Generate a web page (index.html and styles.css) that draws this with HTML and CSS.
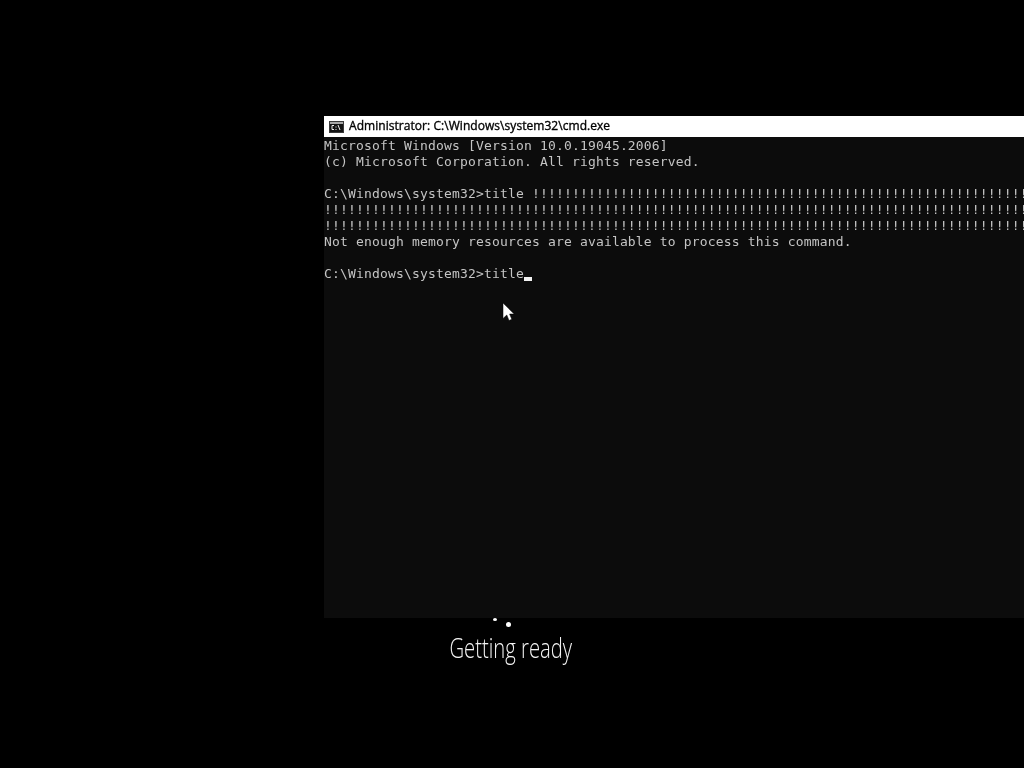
FILE: index.html
```html
<!DOCTYPE html>
<html lang="en">
<head>
<meta charset="utf-8">
<title>Administrator: C:\Windows\system32\cmd.exe</title>
<link rel="stylesheet" href="styles.css">
</head>
<body>
<main class="desktop">
  <section class="splash">
    <div class="spinner"><i class="dot dot-a"></i><i class="dot dot-b"></i></div>
    <p class="status">Getting ready</p>
  </section>
  <section class="window">
    <header class="titlebar">
      <svg class="app-icon" width="15" height="12" viewBox="0 0 15 12" aria-hidden="true">
        <rect x="0" y="0" width="15" height="12" fill="#3a3a3a"/>
        <rect x="1" y="1" width="13" height="2" fill="#a8a8a8"/>
        <rect x="1" y="3" width="13" height="8" fill="#141414"/>
        <path d="M5 4.5H3V8.5H5M7 5.5V6.5M7 8V9M9 4L11 9" fill="none" stroke="#f0f0f0" stroke-width="1"/>
      </svg>
      <span class="title-text">Administrator: C:\Windows\system32\cmd.exe</span>
    </header>
<pre class="console">Microsoft Windows [Version 10.0.19045.2006]
(c) Microsoft Corporation. All rights reserved.

C:\Windows\system32&gt;title !!!!!!!!!!!!!!!!!!!!!!!!!!!!!!!!!!!!!!!!!!!!!!!!!!!!!!!!!!!!!!!!!!!!!!!!!!
!!!!!!!!!!!!!!!!!!!!!!!!!!!!!!!!!!!!!!!!!!!!!!!!!!!!!!!!!!!!!!!!!!!!!!!!!!!!!!!!!!!!!!!!!!!!
!!!!!!!!!!!!!!!!!!!!!!!!!!!!!!!!!!!!!!!!!!!!!!!!!!!!!!!!!!!!!!!!!!!!!!!!!!!!!!!!!!!!!!!!!!!!
Not enough memory resources are available to process this command.

C:\Windows\system32&gt;title<span class="caret"></span></pre>
  </section>
  <svg class="pointer" width="13" height="20" viewBox="0 0 13 20" aria-hidden="true">
    <path d="M1 1V16.5L4.8 13L7 18.5L9.8 17.3L7.6 12H12.2Z" fill="#fff" stroke="#000" stroke-width="0.5"/>
  </svg>
</main>
</body>
</html>
```
FILE: styles.css
```css
html, body {
  margin: 0;
  height: 100%;
  background: #000;
}

.desktop {
  position: relative;
  width: 1024px;
  height: 768px;
  overflow: hidden;
  background: #000;
}

.splash {
  display: flex;
  flex-direction: column;
  align-items: center;
  padding-top: 612px;
  padding-right: 2px;
}

.spinner {
  position: relative;
  width: 40px;
  height: 18px;
}

.dot {
  position: absolute;
  border-radius: 50%;
  background: #fff;
}

.dot-a {
  left: 2px;
  top: 6px;
  width: 4px;
  height: 3px;
}

.dot-b {
  left: 15px;
  top: 10px;
  width: 5px;
  height: 5px;
}

.status {
  margin: 0;
  color: #f4f4f4;
  font-family: "Open Sans", "Noto Sans", sans-serif;
  font-weight: 300;
  font-size: 27px;
  line-height: 36px;
  transform: scaleX(0.75);
  filter: blur(0.3px);
}

.window {
  position: absolute;
  left: 324px;
  top: 116px;
  width: 700px;
  height: 502px;
  display: flex;
  flex-direction: column;
  background: #0c0c0c;
  overflow: hidden;
}

.titlebar {
  flex: none;
  height: 21px;
  display: flex;
  align-items: center;
  gap: 5px;
  padding-left: 5px;
  background: #fff;
}

.app-icon {
  flex: none;
}

.title-text {
  color: #000;
  font-family: "Open Sans", "Liberation Sans", sans-serif;
  font-size: 12px;
  letter-spacing: 0.05px;
  line-height: 19px;
  margin-bottom: 2px;
  white-space: nowrap;
  -webkit-text-stroke: 0.35px #000;
  filter: blur(0.25px);
}

.console {
  flex: 1;
  margin: 0;
  padding-top: 1px;
  color: #c4c4c4;
  font-family: "DejaVu Sans Mono", "Liberation Mono", monospace;
  font-size: 13px;
  letter-spacing: 0.17px;
  line-height: 16px;
  white-space: pre;
  overflow: hidden;
  filter: blur(0.3px);
}

.caret {
  display: inline-block;
  width: 8px;
  height: 4px;
  background: #f2f2f2;
  vertical-align: -3px;
}

.pointer {
  position: absolute;
  left: 502px;
  top: 302px;
}
```
